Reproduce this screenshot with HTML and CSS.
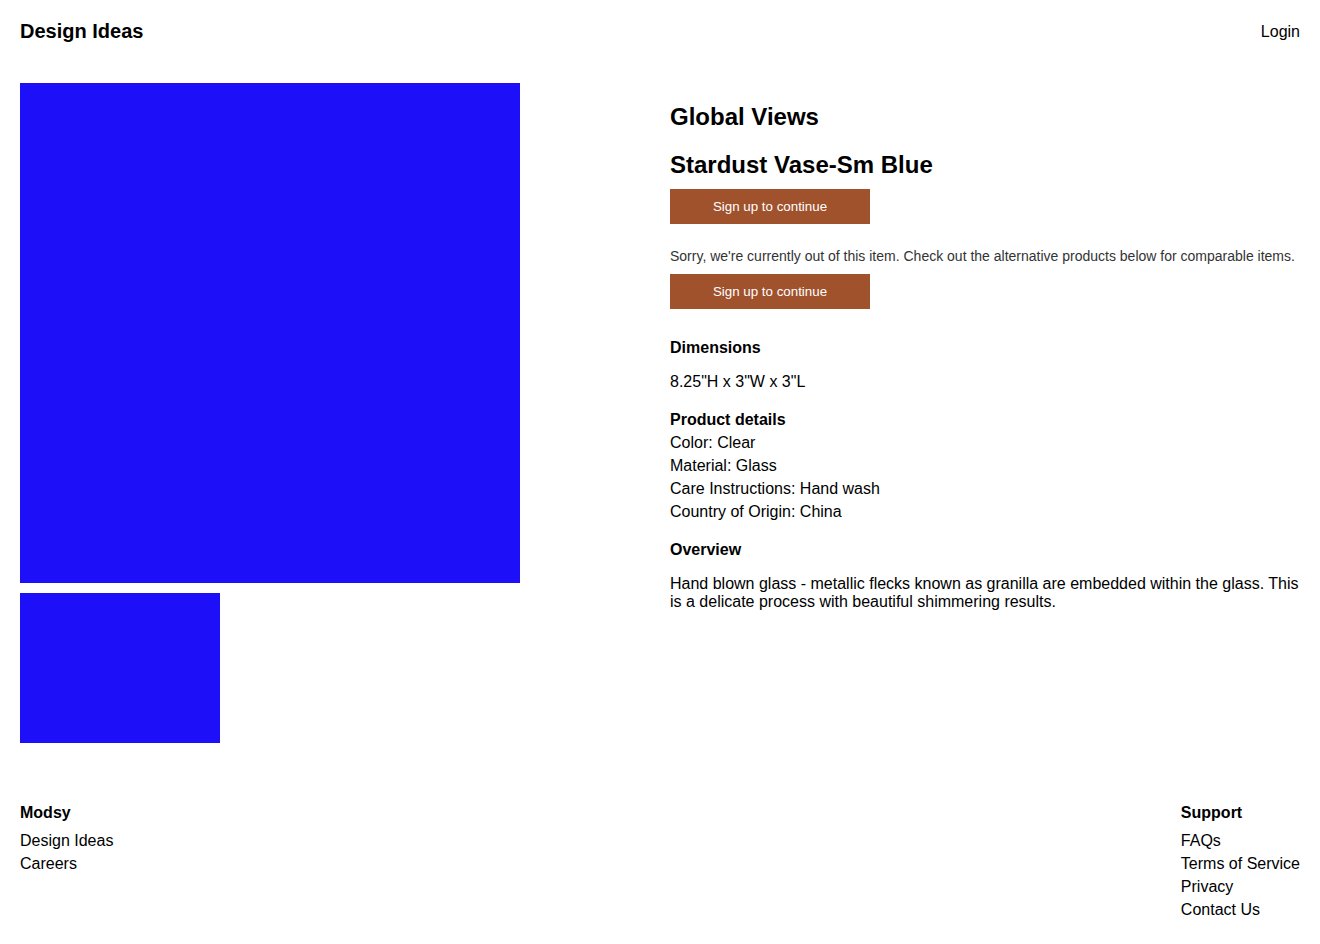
FILE: index.html
```html
<!DOCTYPE html>
<html lang="en">
<head>
<meta charset="utf-8">
<title>Stardust Vase-Sm Blue</title>
<link rel="stylesheet" href="styles.css">
</head>
<body>
<div class="page">
  <header class="header">
    <a class="brand" href="#">Design Ideas</a>
    <a class="login" href="#">Login</a>
  </header>
  <main class="product">
    <div class="gallery">
      <div class="photo photo-main"></div>
      <div class="photo photo-thumb"></div>
    </div>
    <div class="info">
      <h2 class="vendor">Global Views</h2>
      <h1 class="title">Stardust Vase-Sm Blue</h1>
      <button class="cta">Sign up to continue</button>
      <p class="notice">Sorry, we're currently out of this item. Check out the alternative products below for comparable items.</p>
      <button class="cta">Sign up to continue</button>
      <section class="section first">
        <h3 class="label">Dimensions</h3>
        <div class="dim">8.25"H x 3"W x 3"L</div>
      </section>
      <section class="section">
        <h3 class="label">Product details</h3>
        <div class="line">Color: Clear</div>
        <div class="line">Material: Glass</div>
        <div class="line">Care Instructions: Hand wash</div>
        <div class="line">Country of Origin: China</div>
      </section>
      <section class="section">
        <h3 class="label">Overview</h3>
        <p class="overview">Hand blown glass - metallic flecks known as granilla are embedded within the glass. This is a delicate process with beautiful shimmering results.</p>
      </section>
    </div>
  </main>
  <footer class="footer">
    <div class="fcol">
      <h4 class="label">Modsy</h4>
      <a class="flink" href="#">Design Ideas</a>
      <a class="flink" href="#">Careers</a>
    </div>
    <div class="fcol">
      <h4 class="label">Support</h4>
      <a class="flink" href="#">FAQs</a>
      <a class="flink" href="#">Terms of Service</a>
      <a class="flink" href="#">Privacy</a>
      <a class="flink" href="#">Contact Us</a>
    </div>
  </footer>
</div>
</body>
</html>
```
FILE: styles.css
```css
* { box-sizing: border-box; }
html, body { margin: 0; padding: 0; background: #fff; }
body {
  font-family: "Liberation Sans", Arial, sans-serif;
  color: #000;
  font-size: 16px;
}
a { color: inherit; text-decoration: none; }
.page { padding: 20px; }

.header {
  display: flex;
  justify-content: space-between;
  align-items: center;
  height: 23px;
}
.brand { font-size: 20px; font-weight: bold; line-height: 23px; }
.login { font-size: 16px; line-height: 23px; }

.product {
  display: grid;
  grid-template-columns: 1fr 1fr;
  column-gap: 20px;
  margin-top: 40px;
}
.gallery { display: flex; flex-direction: column; gap: 10px; }
.photo { background: #1d10f9; }
.photo-main { width: 500px; height: 500px; }
.photo-thumb { width: 200px; height: 150px; }

.info { display: flex; flex-direction: column; align-items: flex-start; }
.vendor { font-size: 24px; line-height: 28px; margin: 20px 0 0; font-weight: bold; }
.title { font-size: 24px; line-height: 28px; margin: 20px 0 10px; font-weight: bold; }
.cta {
  width: 200px;
  height: 35px;
  background: #a0522d;
  color: #fff;
  border: 0;
  font-family: "Liberation Sans", Arial, sans-serif;
  font-size: 13.333px;
  padding: 0;
  cursor: pointer;
}
.notice {
  font-size: 14px;
  line-height: 16px;
  color: #333;
  margin: 24px 0 10px;
}
.section { margin-top: 15px; align-self: stretch; }
.section.first { margin-top: 27px; }
.label { font-size: 16px; font-weight: bold; line-height: 23px; margin: 0; }
.dim { line-height: 23px; margin-top: 11px; }
.line { line-height: 23px; }
.overview { margin: 14px 0 0; line-height: 18px; }

.footer {
  display: flex;
  justify-content: space-between;
  margin-top: 58px;
}
.fcol { display: flex; flex-direction: column; }
.fcol .label { margin-bottom: 5px; }
.flink { line-height: 23px; }
```
